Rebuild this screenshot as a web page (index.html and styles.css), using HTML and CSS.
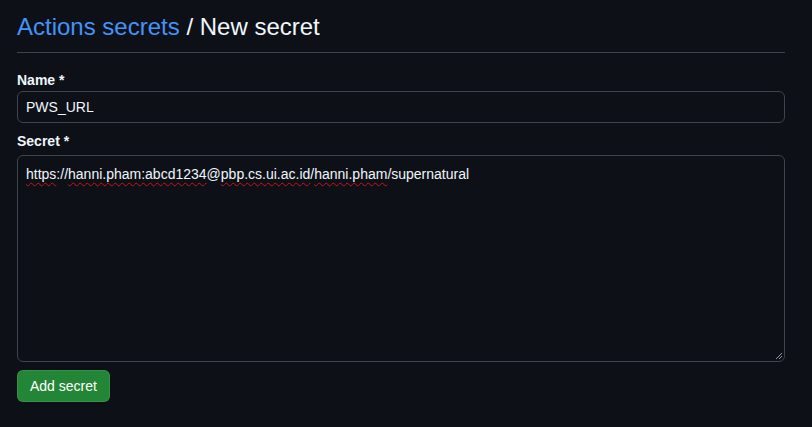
FILE: index.html
```html
<!DOCTYPE html>
<html lang="en">
<head>
<meta charset="utf-8">
<title>New secret</title>
<link rel="stylesheet" href="styles.css">
</head>
<body>
<main class="page">
  <div class="subhead">
    <h2 class="subhead-title"><a href="#" class="crumb-link">Actions secrets</a> / New secret</h2>
  </div>
  <form class="secret-form">
    <label class="field-label" for="name">Name *</label>
    <input id="name" class="text-input" type="text" value="PWS_URL">
    <label class="field-label label-secret" for="secret">Secret *</label>
    <div class="textarea-wrap">
      <div class="textarea-box" id="secret"><span class="sp">https</span>://<span class="sp">hanni.pham:abcd1234</span>@<span class="sp">pbp.cs.ui.ac.id</span>/<span class="sp">hanni.pham</span>/supernatural</div>
      <svg class="grip" width="8" height="8" viewBox="0 0 8 8" aria-hidden="true"><path d="M7 1 L1 7 M7 4 L4 7" stroke="#9198a1" stroke-width="1"/></svg>
    </div>
    <div class="actions">
      <button type="button" class="btn-primary">Add secret</button>
    </div>
  </form>
</main>
</body>
</html>
```

FILE: styles.css
```css
html, body {
  margin: 0;
  padding: 0;
  background: #0d1117;
}
body {
  font-family: "Liberation Sans", Arial, sans-serif;
  color: #f0f6fc;
  font-size: 14px;
}
.page {
  padding: 9px 27px 0 17px;
}
.subhead {
  border-bottom: 1px solid #3d444d;
  padding-bottom: 7px;
}
.subhead-title {
  margin: 0;
  font-size: 24px;
  line-height: 36px;
  font-weight: 400;
  color: #f0f6fc;
}
.crumb-link {
  color: #4493f8;
  text-decoration: none;
}
.secret-form {
  display: flex;
  flex-direction: column;
  padding-top: 17px;
}
.field-label {
  font-weight: 700;
  font-size: 14px;
  line-height: 20px;
  margin-bottom: 1px;
}
.label-secret {
  margin-top: 8px;
  margin-bottom: 4px;
}
.text-input {
  box-sizing: border-box;
  height: 32px;
  width: 100%;
  margin: 0;
  padding: 0 8px;
  background: #0d1117;
  border: 1px solid #3d444d;
  border-radius: 6px;
  color: #f0f6fc;
  font-family: "Liberation Sans", Arial, sans-serif;
  font-size: 14px;
  outline: none;
}
.textarea-wrap {
  position: relative;
}
.textarea-box {
  box-sizing: border-box;
  height: 207px;
  width: 100%;
  padding: 8px 8px;
  background: #0d1117;
  border: 1px solid #3d444d;
  border-radius: 6px;
  color: #f0f6fc;
  font-size: 14px;
  line-height: 20px;
}
.sp {
  text-decoration: underline wavy #d01018;
  text-decoration-thickness: 1px;
  text-underline-offset: 3px;
  text-decoration-skip-ink: none;
}
.grip {
  position: absolute;
  right: 2px;
  bottom: 2px;
}
.actions {
  padding-top: 8px;
}
.btn-primary {
  box-sizing: border-box;
  height: 32px;
  padding: 0 12px;
  background: #238636;
  border: 1px solid rgba(240, 246, 252, 0.1);
  border-radius: 6px;
  color: #ffffff;
  font-family: "Liberation Sans", Arial, sans-serif;
  font-size: 14px;
  font-weight: 500;
  cursor: pointer;
}
```
